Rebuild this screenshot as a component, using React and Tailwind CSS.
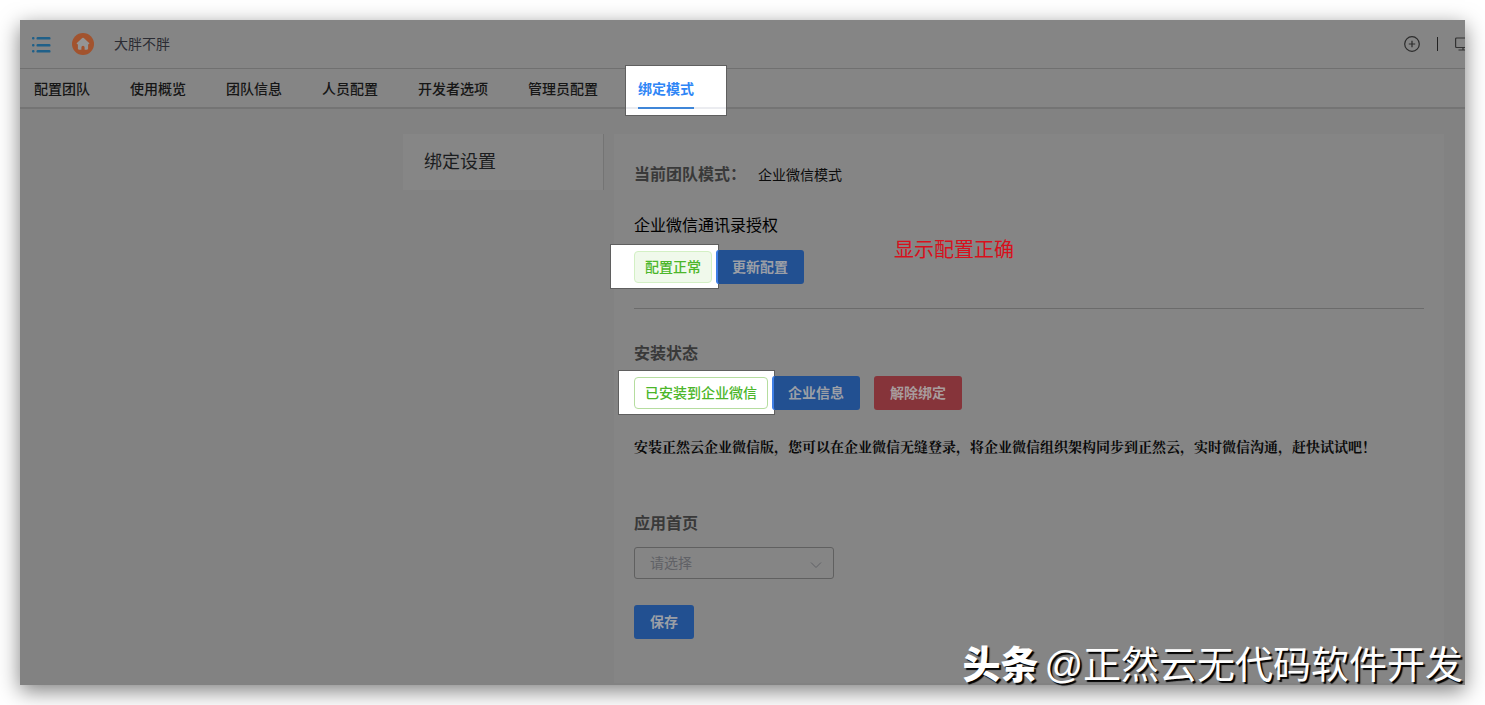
const TABS = ['配置团队', '使用概览', '团队信息', '人员配置', '开发者选项', '管理员配置', '绑定模式']

const BTN = 'h-[34px] rounded-[3px] text-sm font-bold'

function ListIcon() {
  return (
    <svg className="w-5 h-5" viewBox="0 0 20 20" fill="#1f6089">
      {[3, 10, 16].map((y) => (
        <g key={y}>
          <rect x="1" y={y} width="2.5" height="2.6" rx="1" />
          <rect x="5.5" y={y} width="14" height="2.6" rx="1.2" />
        </g>
      ))}
    </svg>
  )
}

function HomeIcon() {
  return (
    <svg className="w-[22px] h-[22px]" viewBox="0 0 22 22">
      <circle cx="11" cy="11" r="11" fill="#a2532e" />
      <path
        d="M10.2 5.1a1.2 1.2 0 0 1 1.6 0l5.3 4.9c.5.5.2 1.2-.4 1.2h-.6v4.4c0 .7-.4 1.1-1.1 1.1h-2.4v-2.3a1.6 1.6 0 0 0-3.2 0v2.3H7c-.7 0-1.1-.4-1.1-1.1v-4.4h-.6c-.6 0-.9-.7-.4-1.2Z"
        fill="#949494"
      />
    </svg>
  )
}

// White box that sits behind the part of the page being pointed out
function Spotlight({ className }) {
  return <span className={`absolute z-0 bg-white border border-[#5f5f5f] ${className}`} />
}

function Header() {
  return (
    <header className="h-[49px] flex items-center justify-between border-b border-[#707070] overflow-hidden">
      <div className="flex items-center pl-[11px]">
        <button type="button" aria-label="菜单"><ListIcon /></button>
        <a href="#home" aria-label="首页" className="ml-[21px]"><HomeIcon /></a>
        <span className="ml-5 text-sm text-[#2b2c33]">大胖不胖</span>
      </div>
      <div className="flex items-center">
        <button type="button" aria-label="新增">
          <svg className="w-4 h-4" viewBox="0 0 16 16" fill="none" stroke="#2c2c2c" strokeWidth="1.2">
            <circle cx="8" cy="8" r="7.3" />
            <path d="M8 4.8v6.4M4.8 8h6.4" />
          </svg>
        </button>
        <span className="w-px h-3.5 ml-[17px] bg-[#222]" />
        <button type="button" aria-label="桌面" className="ml-[17px] w-2.5 overflow-hidden">
          <svg className="w-4 h-4 max-w-none" viewBox="0 0 16 16" fill="none" stroke="#333" strokeWidth="1.2">
            <rect x=".6" y="2" width="14.8" height="9.5" rx="1" />
            <path d="M8 11.5v2.5M3.5 14h9" />
          </svg>
        </button>
      </div>
    </header>
  )
}

function Tabs() {
  return (
    <nav className="h-10 flex gap-10 pl-3.5 border-b-2 border-[#747474]">
      {TABS.map((tab) => {
        const active = tab === '绑定模式'
        return (
          <a
            key={tab}
            href={`#${tab}`}
            className={`relative h-10 leading-10 text-sm whitespace-nowrap ${
              active ? 'font-bold text-[#2f86f6]' : 'font-medium text-[#161616]'
            }`}
          >
            {active && <Spotlight className="-left-[13px] -top-1 w-[102px] h-[51px]" />}
            {active && <span className="absolute z-10 -left-3 bottom-0 w-[100px] h-0.5 bg-[#ebecf0]" />}
            <span className="relative z-10">{tab}</span>
            {active && <span className="absolute z-10 left-0 bottom-0 w-full h-0.5 bg-[#3f86d8]" />}
          </a>
        )
      })}
    </nav>
  )
}

function Settings() {
  return (
    <section className="relative w-[830px] bg-[#858585] px-5 pt-[29px] pb-11">
      <div className="flex items-center h-6">
        <h2 className="text-base font-bold text-[#393939]">当前团队模式：</h2>
        <span className="ml-3 text-sm text-[#0c0c0c]">企业微信模式</span>
      </div>

      <h3 className="mt-[27px] text-base leading-6 text-black">企业微信通讯录授权</h3>
      <div className="relative mt-3 flex items-center gap-1">
        <Spotlight className="-left-6 -top-[6px] w-[109px] h-[45px]" />
        <span className="relative h-8 px-2.5 leading-[30px] rounded border border-[#d3f0c4] bg-[#f0f9eb] text-sm font-medium text-[#4cb62a]">
          配置正常
        </span>
        <button type="button" className={`${BTN} relative border-l-2 border-[#3f7fe6] pl-3.5 pr-4 bg-[#225091] text-[#9b9fa6]`}>
          更新配置
        </button>
      </div>
      <p className="absolute left-[280px] top-[101px] text-xl leading-[30px] text-[#d8101c]">显示配置正确</p>

      <hr className="mt-6 border-[#6b6b6b]" />

      <h2 className="mt-[33px] text-base leading-6 font-bold text-[#393939]">安装状态</h2>
      <div className="relative mt-2.5 flex items-center">
        <Spotlight className="-left-4 -top-[6px] w-[157px] h-[45px]" />
        <span className="relative h-8 px-2.5 leading-[30px] rounded border border-[#b5dd9f] bg-white text-sm font-medium text-[#4cb62a]">
          已安装到企业微信
        </span>
        <button type="button" className={`${BTN} relative ml-1 border-l-2 border-[#3f7fe6] pl-3.5 pr-4 bg-[#225091] text-[#9b9fa6]`}>
          企业信息
        </button>
        <button type="button" className={`${BTN} ml-3.5 px-4 bg-[#86343a] text-[#a89c9d]`}>
          解除绑定
        </button>
      </div>
      <p className="mt-7 text-sm font-bold text-[#0a0a0a] font-['Liberation_Serif','Noto_Serif_CJK_SC','Noto_Sans_CJK_SC',serif]">
        安装正然云企业微信版，您可以在企业微信无缝登录，将企业微信组织架构同步到正然云，实时微信沟通，赶快试试吧！
      </p>

      <label htmlFor="homepage" className="block mt-[54px] text-base leading-6 font-bold text-[#393939]">
        应用首页
      </label>
      <div className="relative mt-[11px] w-[200px]">
        <select
          id="homepage"
          defaultValue=""
          className="block w-full h-8 pl-[15px] pr-8 appearance-none rounded-[3px] border border-[#606060] bg-transparent text-sm text-[#606166]"
        >
          <option value="">请选择</option>
        </select>
        <svg className="absolute right-3 top-3 w-3 h-3 pointer-events-none" viewBox="0 0 12 12" fill="none" stroke="#606166">
          <path d="m1 3.5 5 5 5-5" />
        </svg>
      </div>

      <button type="button" className={`${BTN} mt-[26px] px-4 bg-[#225091] text-[#9b9fa6]`}>
        保存
      </button>
    </section>
  )
}

export default function App() {
  return (
    <div className="min-h-screen flex p-5 bg-white font-['Liberation_Sans','Noto_Sans_CJK_SC',sans-serif]">
      <div className="relative flex-1 flex flex-col bg-[#858585] shadow-[0_6px_20px_rgba(0,0,0,0.5)]">
        <Header />
        <Tabs />
        <main className="flex-1 flex justify-end gap-2.5 pt-[25px] pr-[21px] pb-0.5 bg-[#828282]">
          <aside className="self-start w-[201px] border-r border-[#747474] bg-[#868686]">
            <a href="#bind" className="block h-14 pl-[21px] leading-[56px] text-lg text-[#1b1d20]">绑定设置</a>
          </aside>
          <Settings />
        </main>
        <p className="absolute right-0.5 bottom-0 flex gap-1.5 text-[38px] leading-10 text-white whitespace-nowrap [text-shadow:2px_2px_1px_#000]">
          <span className="font-black">头条</span>
          <span>@正然云无代码软件开发</span>
        </p>
      </div>
    </div>
  )
}
